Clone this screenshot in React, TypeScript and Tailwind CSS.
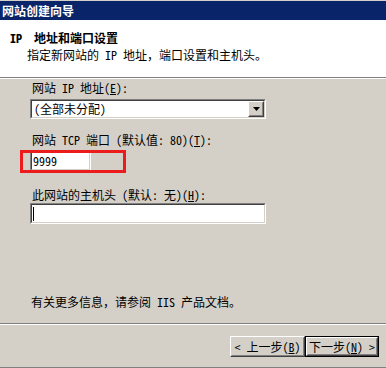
import React from "react";

const font = "font-['Noto_Sans_Mono_CJK_SC','Noto_Sans_CJK_SC',sans-serif]";

function Sunken({ className, children }: { className?: string; children?: React.ReactNode }) {
  return (
    <div className={`border border-t-[#808080] border-l-[#808080] border-b-white border-r-white ${className ?? ""}`}>
      <div className="h-full w-full border border-t-[#404040] border-l-[#404040] border-b-[#d4d0c8] border-r-[#d4d0c8] bg-white">
        {children}
      </div>
    </div>
  );
}

function Raised({ className, children }: { className?: string; children?: React.ReactNode }) {
  return (
    <div className={`border border-t-white border-l-white border-b-[#404040] border-r-[#404040] bg-[#d4d0c8] ${className ?? ""}`}>
      <div className="h-full w-full border border-t-[#d4d0c8] border-l-[#d4d0c8] border-b-[#808080] border-r-[#808080] flex items-center justify-center">
        {children}
      </div>
    </div>
  );
}

export default function App() {
  return (
    <div className={`relative w-[386px] h-[368px] overflow-hidden bg-[#d4d0c8] text-[12px] leading-[16px] text-black ${font}`}>
      {/* title bar */}
      <div className="h-[20px] border-t border-t-[#d4d0c8] bg-[#0a246a] pl-[2px] text-[12px] font-bold leading-[19px] text-white">
        网站创建向导
      </div>
      {/* header */}
      <div className="h-[57px] bg-white pl-[10px] pt-[10px]">
        <div className="font-bold">IP&nbsp;&nbsp;地址和端口设置</div>
        <div className="mt-[1px] pl-[17px]">指定新网站的 IP 地址，端口设置和主机头。</div>
      </div>
      <div className="h-px bg-[#808080]" />
      <div className="h-px bg-white" />
      {/* body */}
      <div className="h-[244px] pl-[30px] pt-[1px]">
        <div className="pl-[2px]">
          网站 IP 地址(<span className="underline">E</span>):
        </div>
        <Sunken className="mt-[3px] h-[20px] w-[236px]">
          <div className="flex h-full items-center justify-between">
            <span className="pl-[2px] leading-[16px]">(全部未分配)</span>
            <Raised className="h-[16px] w-[16px]">
              <svg width="7" height="4" viewBox="0 0 7 4">
                <path d="M0 0H7L3.5 4Z" fill="#000" />
              </svg>
            </Raised>
          </div>
        </Sunken>
        <div className="mt-[13px] pl-[2px]">
          网站 TCP 端口 (默认值: 80)(<span className="underline">T</span>):
        </div>
        <Sunken className="mt-[3px] h-[20px] w-[61px]">
          <div className="pl-[1px] leading-[16px]">9999</div>
        </Sunken>
        <div className="mt-[16px] pl-[2px]">
          此网站的主机头 (默认: 无)(<span className="underline">H</span>):
        </div>
        <Sunken className="h-[21px] w-[236px]">
          <div className="flex h-full items-center pl-[1px]">
            <span className="block h-[14px] w-px bg-black" />
          </div>
        </Sunken>
        <div className="mt-[70px] pl-[1px]">有关更多信息，请参阅 IIS 产品文档。</div>
      </div>
      <div className="h-px bg-[#808080]" />
      <div className="h-px bg-white" />
      {/* footer */}
      <div className="flex h-[42px] justify-end pr-[7px] pt-[11px]">
        <Raised className="h-[21px] w-[75px]">
          <span>&lt; 上一步(<span className="underline">B</span>)</span>
        </Raised>
        <div className="h-[21px] w-[74px] border border-black">
          <Raised className="h-full w-full">
            <span>下一步(<span className="underline">N</span>) &gt;</span>
          </Raised>
        </div>
      </div>
      <div className="h-px bg-[#808080]" />
      {/* red annotation box */}
      <div className="absolute left-[20px] top-[150px] h-[23px] w-[106px] border-[3px] border-[#ec1c1c]" />
    </div>
  );
}
